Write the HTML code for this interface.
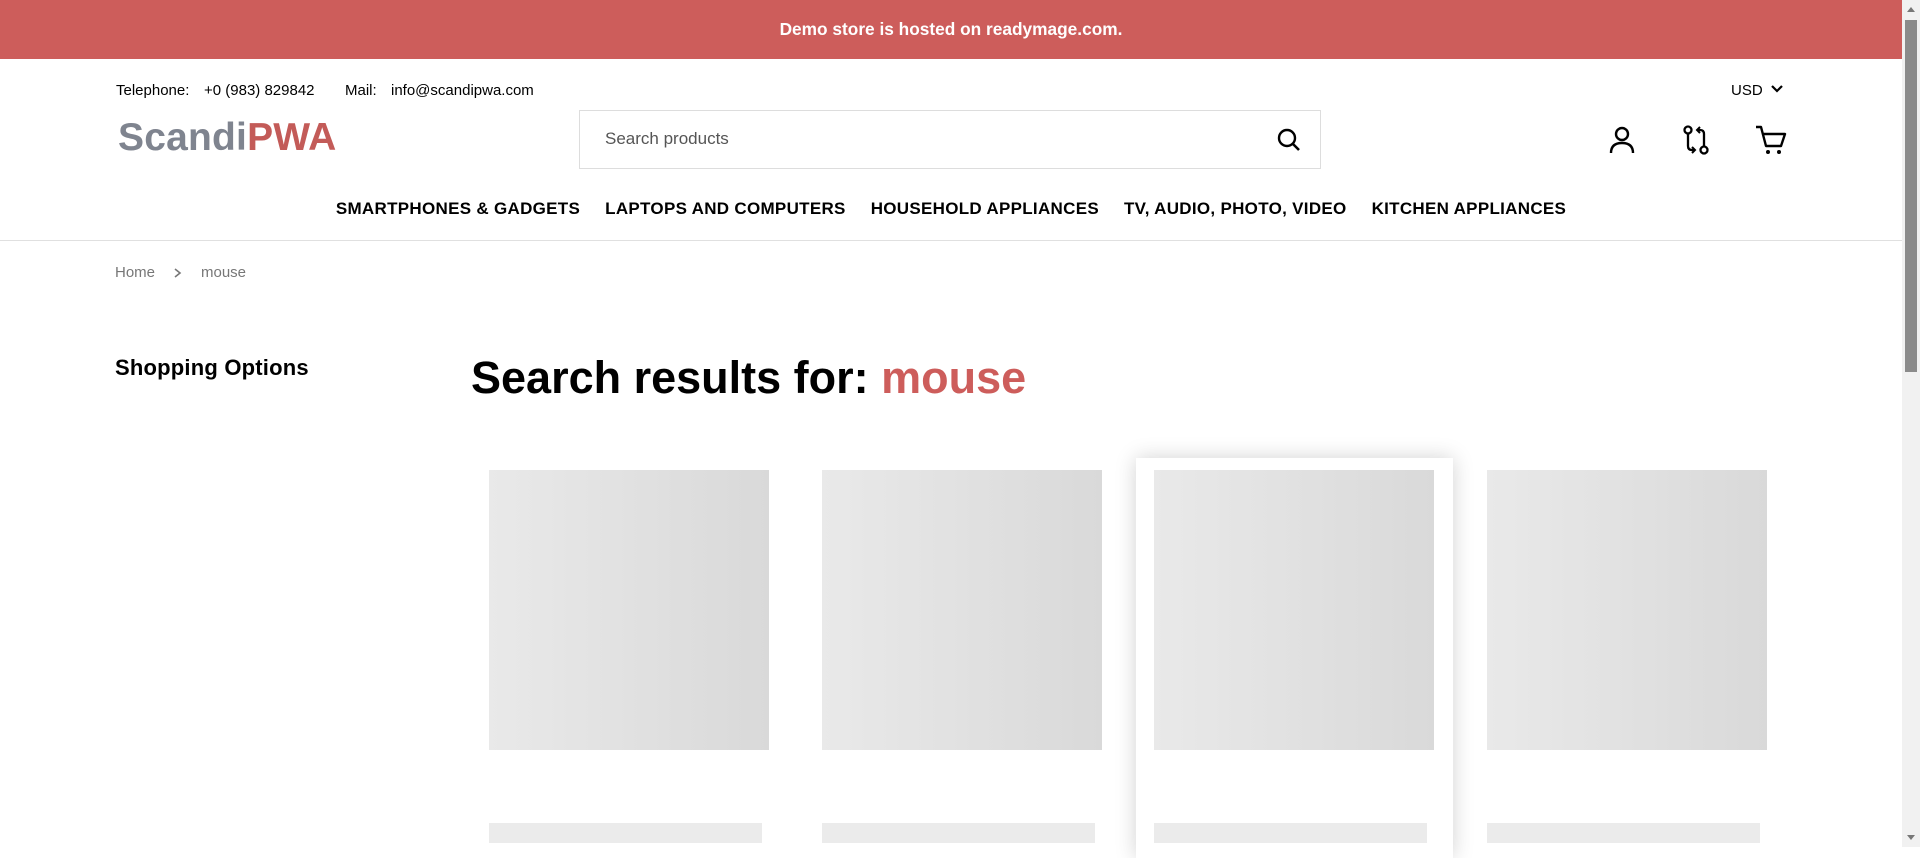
<!DOCTYPE html>
<html><head><meta charset="utf-8"><style>
*{margin:0;padding:0;box-sizing:border-box}
body{width:1920px;height:847px;overflow:hidden;background:#fff;font-family:"Liberation Sans",Arial,sans-serif;color:#000;position:relative}
.abs{position:absolute}
.banner{left:0;top:0;width:1902px;height:59px;background:#cd5d5b;color:#fff;font-weight:bold;font-size:17.3px;text-align:center;line-height:59px}
.sb{left:1902px;top:0;width:18px;height:847px;background:#f1f1f1}
.thumb{left:1905px;top:20px;width:12px;height:352px;background:#8b8b8b;border-radius:0}
.top{top:82px;font-size:15px;line-height:18px}
.nav{top:199px;left:0;width:1902px;text-align:center;font-weight:bold;font-size:17px;line-height:20px;padding-left:0}
.nav span{margin:0 12.5px;letter-spacing:0.3px}
.img{width:280px;height:280px;background:linear-gradient(90deg,#e9e9e9,#d9d9d9);top:470px}
.bar{width:273px;height:20px;background:#ebebeb;top:823px}
</style></head><body>
<div class="abs banner">Demo store is hosted on readymage.com.</div>
<div class="abs sb"></div><div class="abs thumb"></div>
<svg class="abs" style="left:1905px;top:4px" width="12" height="10"><path d="M2 8 L6 3 L10 8Z" fill="#777"/></svg>
<svg class="abs" style="left:1905px;top:833px" width="12" height="10"><path d="M2 2 L6 7 L10 2Z" fill="#777"/></svg>
<div class="abs top" style="left:116px">Telephone:</div>
<div class="abs top" style="left:204px">+0 (983) 829842</div>
<div class="abs top" style="left:345px">Mail:</div>
<div class="abs top" style="left:391px">info@scandipwa.com</div>
<div class="abs top" style="left:1731px">USD</div>
<svg class="abs" style="left:1770px;top:83px" width="14" height="12"><path d="M2 3 L7 8 L12 3" stroke="#000" stroke-width="2.2" fill="none"/></svg>
<div class="abs" style="left:118px;top:116px;font-size:39px;font-weight:bold;letter-spacing:0.2px;line-height:44px"><span style="color:#7f848f">Scandi</span><span style="color:#c35b58">PWA</span></div>
<div class="abs" style="left:579px;top:110px;width:742px;height:59px;border:1px solid #ddd"></div>
<div class="abs" style="left:605px;top:129px;font-size:17px;color:#555">Search products</div>
<svg class="abs" style="left:1275px;top:126px" width="28" height="28"><circle cx="12" cy="12" r="8" stroke="#000" stroke-width="2.4" fill="none"/><path d="M18 18 L24 24" stroke="#000" stroke-width="2.6"/></svg>
<svg class="abs" style="left:1607px;top:124px" width="30" height="32"><circle cx="15" cy="10" r="6" stroke="#000" stroke-width="2.4" fill="none"/><path d="M4 29 Q4 19 15 19 Q26 19 26 29" stroke="#000" stroke-width="2.4" fill="none"/></svg>
<svg class="abs" style="left:1680px;top:124px" width="32" height="32"><circle cx="8" cy="6" r="3.5" stroke="#000" stroke-width="2.3" fill="none"/><circle cx="24" cy="26" r="3.5" stroke="#000" stroke-width="2.3" fill="none"/><path d="M8 10 V22 Q8 26 12 26 H14" stroke="#000" stroke-width="2.3" fill="none"/><path d="M12 23 L15 26 L12 29" stroke="#000" stroke-width="2" fill="none"/><path d="M24 22 V10 Q24 6 20 6 H18" stroke="#000" stroke-width="2.3" fill="none"/><path d="M20 3 L17 6 L20 9" stroke="#000" stroke-width="2" fill="none"/></svg>
<svg class="abs" style="left:1754px;top:124px" width="34" height="32"><path d="M2 3 H7 L12 22 H27 L31 10 H9" stroke="#000" stroke-width="2.4" fill="none" stroke-linejoin="round"/><circle cx="14" cy="28" r="2" fill="#000"/><circle cx="25" cy="28" r="2" fill="#000"/></svg>
<div class="abs nav"><span>SMARTPHONES &amp; GADGETS</span><span>LAPTOPS AND COMPUTERS</span><span>HOUSEHOLD APPLIANCES</span><span>TV, AUDIO, PHOTO, VIDEO</span><span>KITCHEN APPLIANCES</span></div>
<div class="abs" style="left:0;top:240px;width:1902px;height:1px;background:#e0e0e0"></div>
<div class="abs" style="left:115px;top:264px;font-size:15px;color:#777">Home</div>
<svg class="abs" style="left:173px;top:267px" width="10" height="12"><path d="M2 2 L7 6 L2 10" stroke="#777" stroke-width="1.6" fill="none"/></svg>
<div class="abs" style="left:201px;top:264px;font-size:15px;color:#777">mouse</div>
<div class="abs" style="left:115px;top:355px;font-size:22px;font-weight:bold;letter-spacing:0.2px">Shopping Options</div>
<div class="abs" style="left:471px;top:352px;font-size:45px;font-weight:bold">Search results for: <span style="color:#cd5d5b">mouse</span></div>
<div class="abs" style="left:1136px;top:458px;width:317px;height:400px;background:#fff;box-shadow:0 0 20px rgba(0,0,0,.18)"></div>
<div class="abs img" style="left:489px"></div>
<div class="abs img" style="left:822px"></div>
<div class="abs img" style="left:1154px"></div>
<div class="abs img" style="left:1487px"></div>
<div class="abs bar" style="left:489px"></div>
<div class="abs bar" style="left:822px"></div>
<div class="abs bar" style="left:1154px"></div>
<div class="abs bar" style="left:1487px"></div>
</body></html>
